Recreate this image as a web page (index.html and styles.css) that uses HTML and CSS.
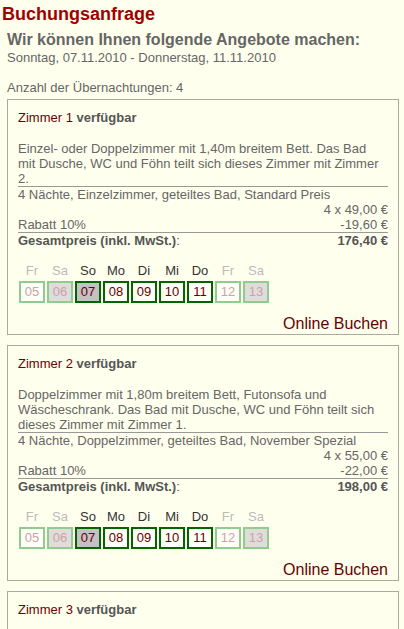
FILE: index.html
```html
<!DOCTYPE html>
<html lang="de">
<head>
<meta charset="utf-8">
<title>Buchungsanfrage</title>
<link rel="stylesheet" href="styles.css">
</head>
<body>
<h1 class="title">Buchungsanfrage</h1>
<main class="content">
  <h2 class="subtitle">Wir können Ihnen folgende Angebote machen:</h2>
  <p class="dates">Sonntag, 07.11.2010 - Donnerstag, 11.11.2010</p>
  <p class="nights">Anzahl der Übernachtungen: 4</p>

  <section class="offer">
    <div class="offer-head"><span class="room">Zimmer 1</span> <b>verfügbar</b></div>
    <p class="desc">Einzel- oder Doppelzimmer mit 1,40m breitem Bett. Das Bad mit&nbsp;Dusche, WC und Föhn teilt sich dieses Zimmer mit Zimmer 2.</p>
    <div class="prices">
      <div class="row">4 Nächte, Einzelzimmer, geteiltes Bad, Standard Preis</div>
      <div class="row right">4 x 49,00 €</div>
      <div class="row split"><span>Rabatt 10%</span><span>-19,60 €</span></div>
      <div class="row split total"><span><b>Gesamtpreis (inkl. MwSt.)</b>:</span><b>176,40 €</b></div>
    </div>
    <div class="cal">
      <span class="dn off">Fr</span><span class="dn off">Sa</span><span class="dn">So</span><span class="dn">Mo</span><span class="dn">Di</span><span class="dn">Mi</span><span class="dn">Do</span><span class="dn off">Fr</span><span class="dn off">Sa</span>
      <span class="day out">05</span><span class="day out we">06</span><span class="day in we">07</span><span class="day in">08</span><span class="day in">09</span><span class="day in">10</span><span class="day in">11</span><span class="day out">12</span><span class="day out we">13</span>
    </div>
    <div class="book"><a href="#">Online Buchen</a></div>
  </section>

  <section class="offer">
    <div class="offer-head"><span class="room">Zimmer 2</span> <b>verfügbar</b></div>
    <p class="desc">Doppelzimmer mit 1,80m breitem Bett, Futonsofa und Wäscheschrank. Das Bad mit Dusche, WC und Föhn teilt sich dieses Zimmer mit Zimmer 1.</p>
    <div class="prices">
      <div class="row">4 Nächte, Doppelzimmer, geteiltes Bad, November Spezial</div>
      <div class="row right">4 x 55,00 €</div>
      <div class="row split"><span>Rabatt 10%</span><span>-22,00 €</span></div>
      <div class="row split total"><span><b>Gesamtpreis (inkl. MwSt.)</b>:</span><b>198,00 €</b></div>
    </div>
    <div class="cal">
      <span class="dn off">Fr</span><span class="dn off">Sa</span><span class="dn">So</span><span class="dn">Mo</span><span class="dn">Di</span><span class="dn">Mi</span><span class="dn">Do</span><span class="dn off">Fr</span><span class="dn off">Sa</span>
      <span class="day out">05</span><span class="day out we">06</span><span class="day in we">07</span><span class="day in">08</span><span class="day in">09</span><span class="day in">10</span><span class="day in">11</span><span class="day out">12</span><span class="day out we">13</span>
    </div>
    <div class="book"><a href="#">Online Buchen</a></div>
  </section>

  <section class="offer last">
    <div class="offer-head"><span class="room">Zimmer 3</span> <b>verfügbar</b></div>
  </section>
</main>
</body>
</html>
```

FILE: styles.css
```css
html, body {
  margin: 0;
  padding: 0;
  background: #ffffee;
  font-family: "Liberation Sans", Arial, sans-serif;
  color: #666666;
  font-size: 13px;
  line-height: 15px;
}

.title {
  margin: 0;
  padding: 3px 2px 0;
  font-size: 18px;
  line-height: 22px;
  font-weight: bold;
  color: #a00000;
}

.content {
  padding: 0 5px 0 7px;
}

.subtitle {
  margin: 5px 0 0 0;
  font-size: 16px;
  line-height: 20px;
  font-weight: bold;
  color: #666666;
}

.dates {
  margin: 0;
}

.nights {
  margin: 15px 0 4px;
}

.offer {
  border: 1px solid #aaaaa0;
  padding: 10px 10px 0;
  margin-bottom: 10px;
}

.offer.last {
  min-height: 60px;
}

.offer-head {
  color: #555555;
}

.room {
  color: #6b0000;
}

.desc {
  margin: 16px 0 0;
  border-bottom: 1px solid #999999;
}

.prices .row {
  line-height: 15px;
}

.right {
  text-align: right;
}

.split {
  display: flex;
  justify-content: space-between;
}

.total {
  border-top: 1px solid #999999;
  color: #555555;
}

.cal {
  display: grid;
  grid-template-columns: repeat(9, 26px);
  column-gap: 2px;
  row-gap: 3px;
  margin: 15px 0 0 1px;
}

.dn {
  text-align: center;
  color: #333333;
}

.dn.off {
  color: #bbbbbb;
}

.day {
  box-sizing: border-box;
  height: 22px;
  line-height: 18px;
  text-align: center;
  border: 2px solid #006600;
  background: #fffff8;
  color: #660000;
}

.day.we {
  background: #e0dcdc;
}

.day.in.we {
  background: #c4c0c4;
}

.day.out {
  border-color: #90cc90;
  color: #c8a4a4;
}

.book {
  text-align: right;
  margin-top: 11px;
  font-size: 16px;
  line-height: 20px;
}

.book a {
  color: #660000;
  text-decoration: none;
}
```
